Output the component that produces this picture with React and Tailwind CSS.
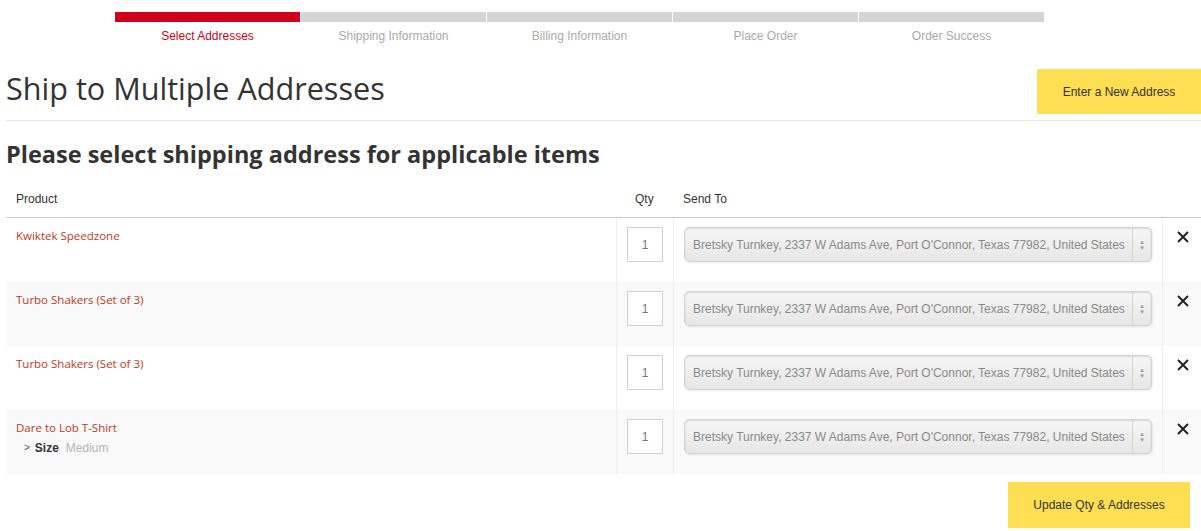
import React from 'react';

const steps = ['Select Addresses', 'Shipping Information', 'Billing Information', 'Place Order', 'Order Success'];

const items = [
  { name: 'Kwiktek Speedzone' },
  { name: 'Turbo Shakers (Set of 3)' },
  { name: 'Turbo Shakers (Set of 3)' },
  { name: 'Dare to Lob T-Shirt', size: 'Medium' },
];

const address = "Bretsky Turnkey, 2337 W Adams Ave, Port O'Connor, Texas 77982, United States";

function AddressSelect() {
  return (
    <div className="flex h-[35px] w-[468px] items-center rounded-[5px] border border-[#d4d4d4] bg-gradient-to-b from-[#f7f7f7] to-[#e6e6e6] shadow-[inset_0_1px_2px_rgba(0,0,0,0.12),1px_1px_2px_rgba(0,0,0,0.08)]">
      <span className="flex-1 truncate pl-[8px] text-[12px] text-[#8a8a8a]">{address}</span>
      <span className="flex h-full w-[19px] flex-col items-center justify-center border-l border-[#d4d4d4] text-[6px] leading-[6px] text-[#999]">
        <span>▲</span>
        <span>▼</span>
      </span>
    </div>
  );
}

export default function App() {
  return (
    <div className="min-h-[531px] overflow-hidden bg-white font-['Liberation_Sans',Arial,sans-serif]">
      {/* Progress steps */}
      <div className="ml-[115px] flex w-[931px] gap-px pt-[12px]">
        {steps.map((s, i) => (
          <div key={s} className="flex w-[185px] flex-col items-center">
            <div className={`h-[10px] w-full ${i === 0 ? 'bg-[#d0021b]' : 'bg-[#d5d5d5]'}`}></div>
            <div className={`mt-[7px] text-[12px] leading-[14px] ${i === 0 ? 'text-[#d0021b]' : 'text-[#aaaaaa]'}`}>{s}</div>
          </div>
        ))}
      </div>

      <div className="pl-[6px]">
        {/* Title row */}
        <div className="mt-[26px] flex items-start justify-between">
          <h1 className="mt-[-1px] font-['Open_Sans',sans-serif] text-[30.6px] leading-[40px] text-[#333]">Ship to Multiple Addresses</h1>
          <button className="h-[45px] w-[164px] bg-[#fedf54] text-[12px] text-[#333]">Enter a New Address</button>
        </div>
        <div className="mt-[6px] h-px bg-[#e8e8e8]"></div>

        <h2 className="mt-[17px] font-['Open_Sans',sans-serif] text-[23.5px] font-bold leading-[32px] text-[#333]">
          Please select shipping address for applicable items
        </h2>

        {/* Table */}
        <div className="mt-[10px]">
          <div className="flex h-[38px] items-center border-b border-[#c9c9c9] text-[12px] text-[#333]">
            <div className="w-[610px] pl-[10px]">Product</div>
            <div className="w-[57px] pl-[19px]">Qty</div>
            <div className="w-[489px] pl-[10px]">Send To</div>
          </div>
          {items.map((it, i) => (
            <div key={i} className={`flex h-[64px] ${i % 2 === 1 ? 'bg-[#f9f9f9]' : 'bg-white'}`}>
              <div className="w-[610px] pl-[10px] pt-[10px]">
                <div className="font-['Open_Sans',sans-serif] text-[11.5px] leading-[16px] text-[#bf3a22]">{it.name}</div>
                {it.size && (
                  <div className="mt-[4px] flex items-center pl-[8px] text-[12px] leading-[16px]">
                    <span className="mr-[5px] text-[10px] text-[#555]">&gt;</span>
                    <span className="font-semibold text-[#333]">Size</span>
                    <span className="ml-[7px] text-[#b5b5b5]">Medium</span>
                  </div>
                )}
              </div>
              <div className="w-[57px] border-l border-[#efefef] pl-[10px] pt-[9px]">
                <div className="flex h-[35px] w-[36px] items-center justify-center border border-[#d0d0d0] bg-white text-[12px] text-[#777]">1</div>
              </div>
              <div className="w-[489px] border-l border-[#efefef] pl-[10px] pt-[9px]">
                <AddressSelect />
              </div>
              <div className="flex-1 border-l border-[#efefef] pl-[13px] pt-[12px]">
                <svg width="14" height="14" viewBox="0 0 14 14" className="text-[#222]">
                  <path d="M2 2 L12 12 M12 2 L2 12" stroke="currentColor" strokeWidth="2" fill="none" />
                </svg>
              </div>
            </div>
          ))}
        </div>

        <div className="mt-[8px] flex justify-end pr-[11px]">
          <button className="h-[46px] w-[182px] bg-[#fedf54] text-[12px] text-[#333]">Update Qty &amp; Addresses</button>
        </div>
      </div>
    </div>
  );
}
